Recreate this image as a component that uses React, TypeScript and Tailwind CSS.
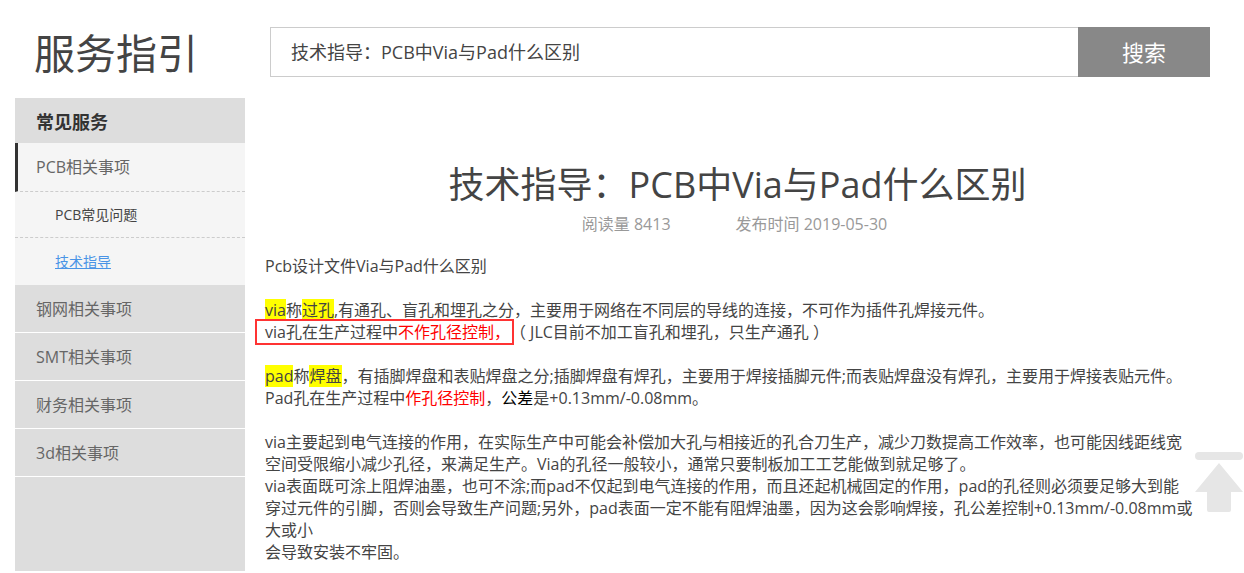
import type { ReactNode } from "react";

const font = "font-['Open_Sans','Noto_Sans_CJK_SC',sans-serif]";

function Hl({ children }: { children: ReactNode }) {
  return <span className="bg-[#ffff00]">{children}</span>;
}

function Red({ children }: { children: ReactNode }) {
  return <span className="text-[#ff0000]">{children}</span>;
}

function Line({ children }: { children?: ReactNode }) {
  return <div className="h-[22px] whitespace-nowrap">{children}</div>;
}

const subItems = [
  { label: "PCB常见问题", active: false },
  { label: "技术指导", active: true },
];

const groups = ["钢网相关事项", "SMT相关事项", "财务相关事项", "3d相关事项"];

function Sidebar() {
  return (
    <aside className="w-[230px] shrink-0 bg-[#dddddd]">
      <div className="flex h-[45px] items-center pl-[21px] pt-[3px] text-[18px] font-bold text-[#333]">常见服务</div>
      <div className="bg-[#f5f5f5]">
        <div className="flex h-[49px] items-center border-l-[3px] border-b border-l-[#333] border-b-[#ccc] border-dashed pl-[18px] text-[16px] text-[#666]" style={{ borderLeftStyle: "solid" }}>
          PCB相关事项
        </div>
        {subItems.map((s, i) => (
          <div
            key={s.label}
            className={
              "flex h-[46px] items-center pl-[40px] text-[14px] " +
              (i === 0 ? "border-b border-dashed border-[#ccc] " : "h-[47px] ") +
              (s.active ? "text-[#4a94e6] underline" : "text-[#444]")
            }
          >
            {s.label}
          </div>
        ))}
      </div>
      {groups.map((g) => (
        <div key={g} className="flex h-[48px] items-center border-b border-white pl-[21px] text-[16px] text-[#666]">
          {g}
        </div>
      ))}
    </aside>
  );
}

function Article() {
  return (
    <main className="flex-1 pl-[20px] pt-[63px] pb-[8px] text-[#444]">
      <h1 className="text-center text-[36px] leading-[48px] text-[#444]">技术指导：PCB中Via与Pad什么区别</h1>
      <div className="mt-[5px] flex h-[20px] items-center justify-center gap-[65px] pr-[6px] text-[16px] text-[#999]">
        <span>阅读量 8413</span>
        <span>发布时间 2019-05-30</span>
      </div>
      <div className="mt-[21px] text-[16px] leading-[22px]">
        <Line>Pcb设计文件Via与Pad什么区别</Line>
        <Line />
        <Line>
          <Hl>via</Hl>称<Hl>过孔</Hl>,有通孔、盲孔和埋孔之分，主要用于网络在不同层的导线的连接，不可作为插件孔焊接元件。
        </Line>
        <Line>
          <span className="relative inline-block leading-[22px]">
            via孔在生产过程中<Red>不作孔径控制，</Red>
            <span className="absolute -left-[10px] -right-[4px] -top-[2px] -bottom-[2px] border-2 border-[#f33]" />
          </span>
          （ JLC目前不加工盲孔和埋孔，只生产通孔 ）
        </Line>
        <Line />
        <Line>
          <Hl>pad</Hl>称<Hl>焊盘</Hl>，有插脚焊盘和表贴焊盘之分;插脚焊盘有焊孔，主要用于焊接插脚元件;而表贴焊盘没有焊孔，主要用于焊接表贴元件。
        </Line>
        <Line>
          Pad孔在生产过程中<Red>作孔径控制</Red>，<span className="text-black">公差</span>是+0.13mm/-0.08mm。
        </Line>
        <Line />
        <Line>via主要起到电气连接的作用，在实际生产中可能会补偿加大孔与相接近的孔合刀生产，减少刀数提高工作效率，也可能因线距线宽</Line>
        <Line>空间受限缩小减少孔径，来满足生产。Via的孔径一般较小，通常只要制板加工工艺能做到就足够了。</Line>
        <Line>via表面既可涂上阻焊油墨，也可不涂;而pad不仅起到电气连接的作用，而且还起机械固定的作用，pad的孔径则必须要足够大到能</Line>
        <Line>穿过元件的引脚，否则会导致生产问题;另外，pad表面一定不能有阻焊油墨，因为这会影响焊接，孔公差控制+0.13mm/-0.08mm或</Line>
        <Line>大或小</Line>
        <Line>会导致安装不牢固。</Line>
      </div>
    </main>
  );
}

function BackToTop() {
  return (
    <svg className="fixed left-[1195px] top-[452px]" width="48" height="61" viewBox="0 0 48 61">
      <rect x="0" y="0" width="48" height="8" rx="4" fill="#e6e6e6" />
      <path d="M24 11 L48 40 L36 40 L36 58 Q36 60 34 60 L14 60 Q12 60 12 58 L12 40 L0 40 Z" fill="#e6e6e6" />
    </svg>
  );
}

export default function App() {
  return (
    <div className={`min-h-screen bg-white ${font}`}>
      <div className="ml-[15px] w-[1195px]">
        <header className="flex h-[98px] items-start">
          <div className="w-[255px] pl-[19px] pt-[27px] text-[41px] leading-[52px] text-[#444]">服务指引</div>
          <div className="mt-[27px] flex h-[50px] flex-1">
            <div className="flex flex-1 items-center border border-r-0 border-[#ccc] pl-[20px] text-[18px] text-[#444]">
              技术指导：PCB中Via与Pad什么区别
            </div>
            <button className="w-[132px] bg-[#888] text-[22px] text-white">搜索</button>
          </div>
        </header>
        <div className="flex">
          <Sidebar />
          <Article />
        </div>
      </div>
      <BackToTop />
    </div>
  );
}
